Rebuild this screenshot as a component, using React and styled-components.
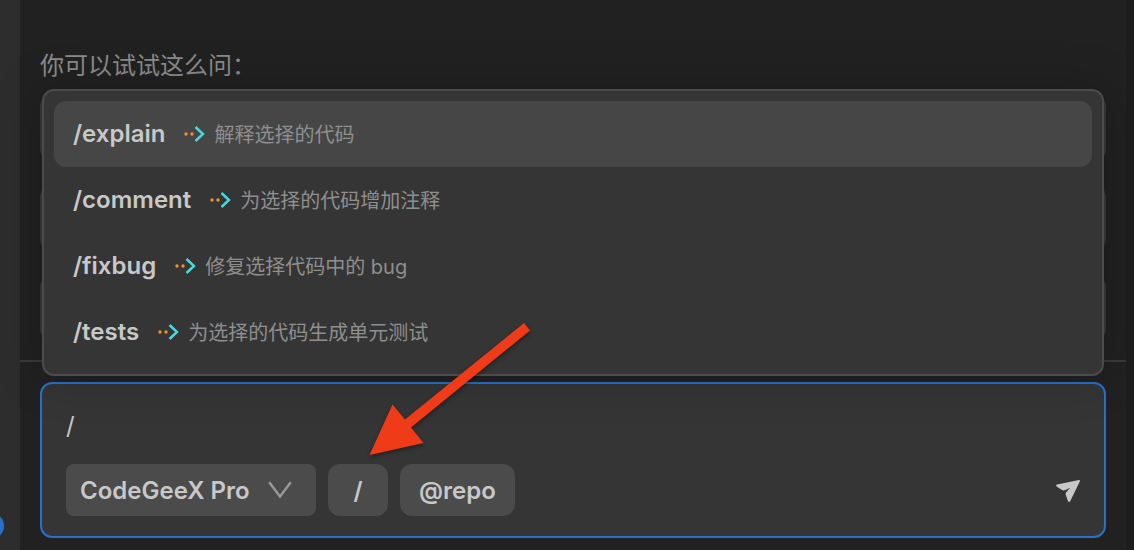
import styled, { createGlobalStyle } from "styled-components";

const GlobalStyle = createGlobalStyle`
  * {
    box-sizing: border-box;
  }
  body {
    margin: 0;
    background-color: #212121;
    color: #c8c8c8;
    font-family: Inter, "Noto Sans CJK SC", sans-serif;
  }
  button,
  select,
  textarea {
    font: inherit;
    color: inherit;
  }
`;

const Container = styled.div`
  position: relative;
  min-height: 100vh;
  display: grid;
  grid-template-columns: 20px 1fr 8px;
  overflow: hidden;
`;
const ActivityBar = styled.aside`
  position: relative;
  background-color: #2d2d2d;
`;
const Badge = styled.span`
  position: absolute;
  right: 16px;
  bottom: 11px;
  width: 26px;
  height: 26px;
  border-radius: 50%;
  background-color: #2770cb;
`;
const ScrollTrack = styled.div`
  background-color: #1d1d1d;
`;
const Panel = styled.main`
  min-width: 0;
  display: flex;
  flex-direction: column;
`;
const Conversation = styled.section`
  flex: 1;
  padding: 48px 20px 0;
`;
const Hint = styled.p`
  margin: 0 0 11px;
  font-size: 24px;
  line-height: 36px;
  color: #8b8b8b;
`;
const Questions = styled.div`
  display: grid;
  gap: 24px;
`;
const Question = styled.div`
  height: 66px;
  border-radius: 12px;
  background-color: #383838;
`;
const Composer = styled.section`
  border-top: 2px solid #3a3a3a;
  padding: 20px 20px 12px;
`;
const InputBox = styled.div`
  position: relative;
  height: 156px;
  padding: 24px;
  border: 2px solid #2770cb;
  border-radius: 12px;
  background-color: #353535;
`;
const Prompt = styled.textarea`
  display: block;
  width: 100%;
  height: 36px;
  margin-bottom: 20px;
  padding: 0;
  border: none;
  outline: none;
  resize: none;
  overflow: hidden;
  background: none;
  font-size: 24px;
  line-height: 36px;
`;
const Toolbar = styled.div`
  display: flex;
  align-items: center;
  gap: 12px;
`;
const ModelPicker = styled.label`
  display: grid;
  align-items: center;
  width: 250px;
  height: 52px;
  border-radius: 8px;
  background-color: #4b4b4b;

  > * {
    grid-area: 1 / 1;
  }
  svg {
    justify-self: end;
    margin-right: 24px;
    pointer-events: none;
  }
`;
const ModelSelect = styled.select`
  appearance: none;
  width: 100%;
  height: 100%;
  padding: 0 14px;
  border: none;
  outline: none;
  background: none;
  font-size: 24px;
  font-weight: 600;
`;
const Button = styled.button`
  width: ${(props) => props.$width}px;
  height: 52px;
  padding: 0;
  border: none;
  border-radius: 12px;
  background-color: #4b4b4b;
  font-size: 24px;
  font-weight: 600;
`;
const SendButton = styled.button`
  display: flex;
  margin-left: auto;
  padding: 0;
  border: none;
  background: none;
`;
const Menu = styled.div`
  position: absolute;
  bottom: calc(100% + 8px);
  left: 0;
  right: 0;
  padding: 10px 10px 9px;
  border: 2px solid #4b4b4b;
  border-radius: 12px;
  background-color: #353535;
  box-shadow: 0 0 48px rgba(0, 0, 0, 0.22);
`;
const MenuItem = styled.button`
  display: flex;
  align-items: center;
  width: 100%;
  height: 66px;
  padding: 0 19px 2px;
  border: none;
  border-radius: 12px;
  background-color: ${(props) => (props.$active ? "#464646" : "transparent")};
  text-align: left;

  svg {
    flex: none;
    margin: 2px 9px 0 19px;
  }
`;
const Command = styled.span`
  font-size: 24px;
  font-weight: 600;
`;
const Description = styled.span`
  font-size: 20px;
  color: #8f8f8f;
`;
const Pointer = styled.svg`
  position: absolute;
  left: 360px;
  top: 314px;
  pointer-events: none;
  filter: drop-shadow(0 2px 2px rgba(0, 0, 0, 0.4));
`;

const commands = [
  { name: "/explain", text: "解释选择的代码" },
  { name: "/comment", text: "为选择的代码增加注释" },
  { name: "/fixbug", text: "修复选择代码中的 bug" },
  { name: "/tests", text: "为选择的代码生成单元测试" },
];

const DottedArrow = () => (
  <svg width="21" height="18" viewBox="0 0 21 18" fill="none">
    <circle cx="2" cy="9" r="1.7" fill="#f0932b" />
    <circle cx="8" cy="9" r="1.7" fill="#f0932b" />
    <path d="M11.5 2l7.5 7-7.5 7" stroke="#45dbe3" strokeWidth="2.4" />
  </svg>
);

const App = () => {
  return (
    <Container>
      <GlobalStyle />
      <ActivityBar>
        <Badge />
      </ActivityBar>
      <Panel>
        <Conversation>
          <Hint>你可以试试这么问：</Hint>
          <Questions>
            <Question />
            <Question />
            <Question />
          </Questions>
        </Conversation>
        <Composer>
          <InputBox>
            <Prompt aria-label="Prompt" defaultValue="/" />
            <Toolbar>
              <ModelPicker>
                <ModelSelect aria-label="Model">
                  <option>CodeGeeX Pro</option>
                </ModelSelect>
                <svg width="24" height="18" viewBox="0 0 24 18" fill="none">
                  <path d="M1.2 1.2L12 15.5 22.8 1.2" stroke="#9a9a9a" strokeWidth="2.4" />
                </svg>
              </ModelPicker>
              <Button $width={60}>/</Button>
              <Button $width={115}>@repo</Button>
              <SendButton aria-label="Send">
                <svg width="24" height="24" viewBox="0 0 24 24" fill="#c8c8c8">
                  <path d="M23 2L1 6.4Q-.6 7 .6 8.4L6 12Q7.6 12.8 9.4 12L14.2 9.8 10.4 14Q9.2 15.4 9.8 17L12 23.2Q13 24.8 14.2 23.2L23.8 3.4Q24.3 1.8 23 2Z" />
                </svg>
              </SendButton>
            </Toolbar>
            <Menu>
              {commands.map((item, index) => (
                <MenuItem key={item.name} $active={index === 0}>
                  <Command>{item.name}</Command>
                  <DottedArrow />
                  <Description>{item.text}</Description>
                </MenuItem>
              ))}
            </Menu>
          </InputBox>
        </Composer>
      </Panel>
      <ScrollTrack />
      <Pointer width="180" height="150" viewBox="0 0 180 150">
        <path
          d="M9.5 141L32.5 90.5 45 105.5 164 9 170 16.5 51 113.5 63.5 129Z"
          fill="#ef3b18"
        />
      </Pointer>
    </Container>
  );
};

export default App;
